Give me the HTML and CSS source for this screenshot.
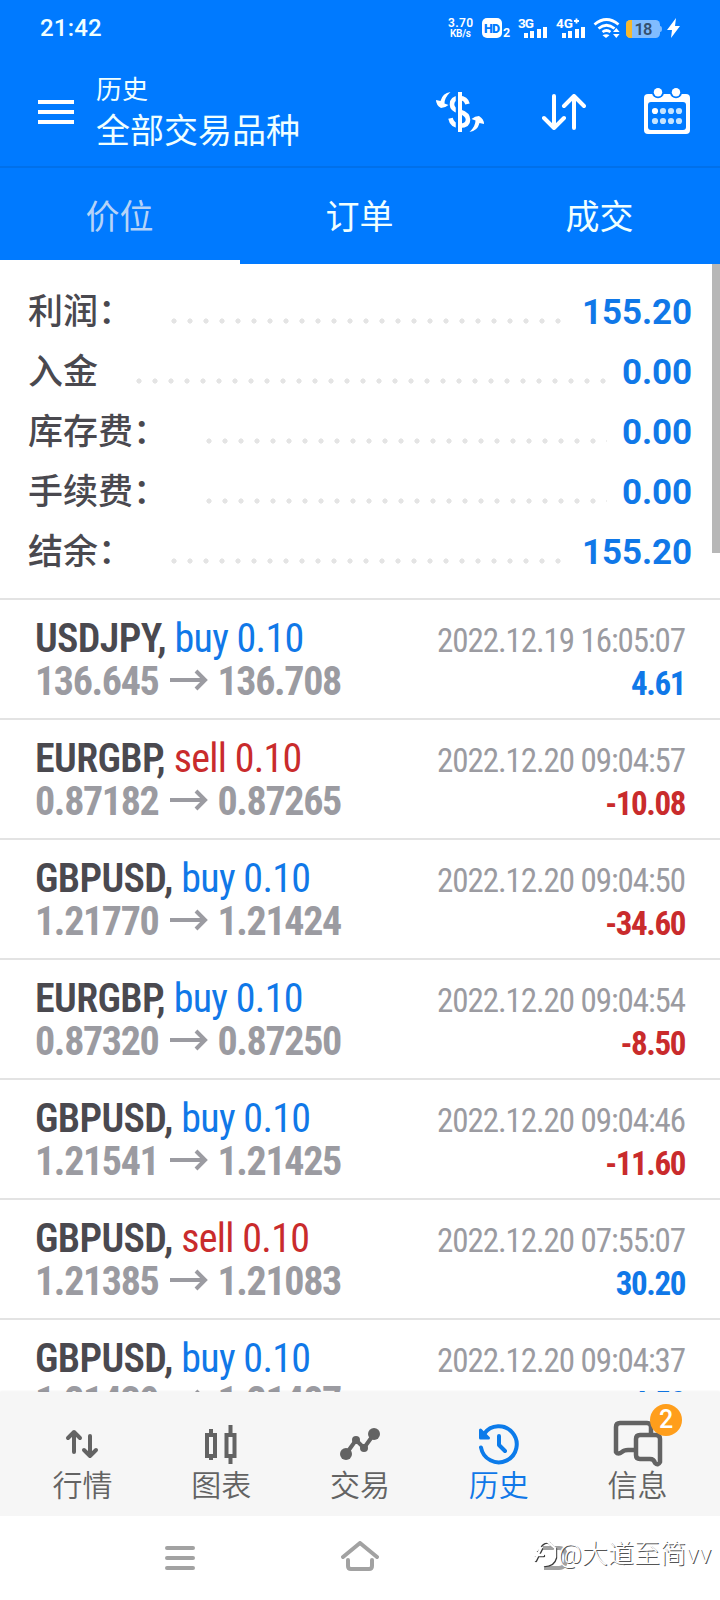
FILE: index.html
```html
<!DOCTYPE html>
<html lang="zh-CN">
<head>
<meta charset="utf-8">
<title>历史</title>
<link rel="stylesheet" href="styles.css">
</head>
<body>
<div class="phone">
  <header class="top">
    <div class="status">
      <span class="clock">21:42</span>
      <svg class="status-icons" width="250" height="40" viewBox="440 8 250 40">
        <g fill="#fff" font-family="Roboto, sans-serif" font-weight="700">
          <text x="448" y="27" font-size="12" font-weight="600" textLength="25">3.70</text>
          <text x="450" y="37" font-size="10" font-weight="600" textLength="21">KB/s</text>
          <rect x="482" y="18" width="20" height="20" rx="5"/>
          <text x="484" y="33" font-size="12.5" fill="#007aff" textLength="16" font-weight="900">HD</text>
          <text x="503" y="37" font-size="12.5">2</text>
          <text x="518" y="28" font-size="13.5" textLength="16">3G</text>
          <text x="556" y="28" font-size="13.5" textLength="17">4G</text>
          <path d="M574 21h5M576.500 18.500v5" stroke="#fff" stroke-width="1.800"/>
          <path d="M524 33h4v5h-4zM530 31h4v7h-4zM537 29h4v9h-4zM543 27h4v11h-4zM562 33h4v5h-4zM568 31h4v7h-4zM575 29h4v9h-4zM581 27h4v11h-4z"/>
          <rect x="626" y="20" width="34" height="18" rx="4.5" fill="#80bcff"/>
          <path d="M630.500 20h1.500v18h-1.500a4.500 4.500 0 0 1-4.500-4.500v-9a4.500 4.500 0 0 1 4.500-4.500z" fill="#f5b82e"/>
          <path d="M660 26q2 0 2 3t-2 3z" fill="#80bcff"/>
          <text x="634.500" y="35" font-size="16.5" font-weight="600" fill="#34506f" textLength="18">18</text>
          <path d="M676 18l-9 12h5l-1 8 9-12h-5z"/>
          <path d="M613 32l3.300-4 3.300 4zM613 34h6.600l-3.300 4z"/>
        </g>
        <g fill="none" stroke="#fff" stroke-width="2.800">
          <path d="M594.500 24.500q12-10 24 0M598.500 28.500q8-6.500 16 0M602.500 32q4-3 8 0"/>
        </g>
        <path d="M602.500 35.300q4-2 7 0l-3.500 2.700z" fill="#fff"/>
      </svg>
    </div>
    <div class="appbar">
      <svg class="menu" width="36" height="24" viewBox="0 0 36 24"><path d="M0 0h36v4H0zM0 10h36v4H0zM0 20h36v4H0z" fill="#fff"/></svg>
      <div class="titles"><span class="title-small">历史</span><span class="title-big">全部交易品种</span></div>
      <div class="actions">
        <svg width="48" height="48" viewBox="436 88 48 48">
          <path d="M467.500 104q-1.500-6-8-6q-7.500 0-7.500 6.500q0 5 8 7.300 8 2.500 8 8q0 6-8 6-8 0-9.500-7.500" fill="none" stroke="#fff" stroke-width="4.600"/>
          <path d="M457 94v37" stroke="#007aff" stroke-width="2.500"/>
          <path d="M460 92v40" stroke="#fff" stroke-width="4"/>
          <g fill="#fff"><path id="swap" d="M450.500 92q-8 1-10 9l-4.500-1q0 5 5 8 4 0 7.500-3l-4-1.500q0-6 6-11.500z"/><use href="#swap" transform="rotate(180 460 112)"/></g>
        </svg>
        <svg width="44" height="36" viewBox="0 0 44 36" fill="none" stroke="#fff" stroke-width="4" stroke-linecap="round" stroke-linejoin="round"><path d="M12 2v32M2 24l10 10 10-10M32 34V2M22 12 32 2l10 10"/></svg>
        <svg width="46" height="46" viewBox="0 0 46 46">
          <rect y="6" width="46" height="40" rx="4" fill="#fff"/><rect x="4" y="14" width="38" height="28" rx="3" fill="#007aff"/>
          <g fill="#007aff"><circle cx="14" cy="4.300" r="6"/><circle cx="32" cy="4.300" r="6"/></g>
          <g fill="#fff"><circle cx="14" cy="4.300" r="4.200"/><circle cx="32" cy="4.300" r="4.200"/></g>
          <g fill="#c4e4ff"><circle cx="11" cy="23" r="3.100" fill="#fff"/><circle cx="19" cy="23" r="3.100"/><circle cx="27" cy="23" r="3.100"/><circle cx="35" cy="23" r="3.100"/><circle cx="11" cy="33" r="3.100"/><circle cx="19" cy="33" r="3.100"/><circle cx="27" cy="33" r="3.100"/><circle cx="35" cy="33" r="3.100"/></g>
        </svg>
      </div>
    </div>
    <nav class="tabs"><span class="tab selected">价位</span><span class="tab">订单</span><span class="tab">成交</span></nav>
  </header>
  <main class="content">
    <section class="summary">
      <div class="sum"><span class="label">利润：</span><i class="dots"></i><b>155.20</b></div>
      <div class="sum"><span class="label">入金</span><i class="dots"></i><b>0.00</b></div>
      <div class="sum"><span class="label">库存费：</span><i class="dots"></i><b>0.00</b></div>
      <div class="sum"><span class="label">手续费：</span><i class="dots"></i><b>0.00</b></div>
      <div class="sum"><span class="label">结余：</span><i class="dots"></i><b>155.20</b></div>
      <div class="scrollbar"></div>
    </section>
    <section class="deals" id="deals"></section>
  </main>
  <nav class="bottom">
    <div class="item"><svg width="60" height="52" viewBox="52 1416 60 52" fill="none" stroke="#636363" stroke-width="4" stroke-linecap="round" stroke-linejoin="round"><path d="M74 1452v-20M68 1438l6-6 6 6M90 1436v20M84 1450l6 6 6-6"/></svg><span>行情</span></div>
    <div class="item"><svg width="60" height="52" viewBox="191 1416 60 52" fill="none" stroke="#636363" stroke-width="4"><path d="M211 1429v5M211 1456v4M230.500 1425v8M230.500 1457v7"/><path d="M207 1435h8v21h-8zM226.500 1435h8v21h-8z"/></svg><span>图表</span></div>
    <div class="item"><svg width="60" height="52" viewBox="330 1416 60 52" fill="#636363"><path d="M346 1454l10-14 8 8 10-14" fill="none" stroke="#636363" stroke-width="4"/><circle cx="346" cy="1454" r="6"/><circle cx="356" cy="1440" r="4"/><circle cx="364" cy="1448" r="4"/><circle cx="374" cy="1434" r="6"/></svg><span>交易</span></div>
    <div class="item active"><svg width="60" height="52" viewBox="469 1416 60 52" fill="none" stroke="#0c7bea" stroke-width="4" stroke-linecap="round" stroke-linejoin="round"><path d="M484 1434a18 18 0 1 1-3 13.500M499 1436v9l6 6"/><path d="M480.500 1430v8h8z" fill="#0c7bea" stroke-width="3"/></svg><span>历史</span></div>
    <div class="item"><svg width="60" height="52" viewBox="608 1416 60 52" fill="none" stroke="#636363" stroke-width="4.500" stroke-linejoin="round"><path d="M634 1450h-6q-4 0-6 2-4 3-6 0v-25q0-4 4-4h27q4 0 4 4v8"/><path d="M640 1435h16q4 0 4 4v23q-2 4-5 1-1-4-5-4h-10q-4 0-4-4v-16q0-4 4-4z"/></svg><em class="badge">2</em><span>信息</span></div>
  </nav>
  <footer class="system">
    <svg width="30" height="24" viewBox="0 0 30 24" stroke="#a2a2a2" stroke-width="4" stroke-linecap="round"><path d="M2 2h26M2 12h26M2 22h26"/></svg>
    <svg class="home" width="38" height="30" viewBox="0 0 38 30" fill="none" stroke="#a2a2a2" stroke-width="4" stroke-linecap="round" stroke-linejoin="round"><path d="M2 16 19 2l17 14M7 19v6q0 3 3 3h18q3 0 3-3v-6"/></svg>
    <svg class="back" width="30" height="24" viewBox="0 0 30 24" fill="none" stroke="#a2a2a2" stroke-width="4"><path d="M4 2h16q7 0 7 10t-7 10H5"/></svg>
    <div class="watermark"><svg width="24" height="32" viewBox="0 0 24 32" fill="none" stroke-linecap="round"><path d="M4 13l4-6q6-5 9 0l5 4v9q-2 8-11 8M2 23l6-12M2 18h8" stroke="#3a3a3a" stroke-width="2.400"/><path d="M3 12l4-6q6-5 9 0l5 4v9q-2 8-11 8M1 22l6-12M1 17h8" stroke="#fff" stroke-width="2.400"/></svg><span>@大道至简vv</span></div>
  </footer>
</div>
<script src="app.js"></script>
</body>
</html>
```

FILE: styles.css
```css
* { box-sizing: border-box; }
body { margin: 0; background: #fff; font-family: Roboto, "Noto Sans CJK SC", sans-serif; color: #4a494f; }
svg { display: block; flex: none; }
.phone { width: 720px; height: 1600px; display: flex; flex-direction: column; overflow: hidden; }
.top { background: #007aff; height: 264px; color: #f0ffff; flex: none; }
.status { height: 56px; padding: 8px 30px 0 40px; display: flex; justify-content: space-between; }
.clock { font-size: 24px; font-weight: 500; line-height: 40px; letter-spacing: .2px; }
.appbar { height: 112px; border-bottom: 2px solid #0070ea; display: flex; padding: 0 30px 0 38px; }
.menu { margin: 44px 22px 0 0; }
.titles { display: flex; flex-direction: column; padding-top: 16px; }
.title-small { font-size: 26px; line-height: 36px; }
.title-big { font-size: 34px; line-height: 46px; }
.actions { margin-left: auto; display: flex; align-items: flex-start; gap: 58px; padding-top: 32px; }
.actions svg:nth-child(2) { margin-top: 6px; }
.tabs { display: grid; grid-template-columns: repeat(3, 1fr); height: 96px; font-size: 34px; line-height: 90px; text-align: center; }
.tab { height: 96px; padding: 4px 1px 0 0; }
.selected { color: #b5d3f8; border-bottom: 4px solid #fff; }
.content { height: 1128px; overflow: hidden; flex: none; }
.summary { position: relative; height: 336px; padding: 19px 28px 0; border-bottom: 2px solid #e3e3e3; }
.sum { height: 60px; display: flex; font-size: 35px; line-height: 60px; }
.label { font-weight: 500; }
.dots { flex: 1; height: 6px; margin: 35px 15px 0 38px; background: radial-gradient(circle at 3px 3px, #e4e4e4 2.300px, transparent 2.900px) 0 0 / 16px 6px repeat-x; }
.sum b { color: #1078e8; font-size: 35px; letter-spacing: -.1px; }
.scrollbar { position: absolute; right: 0; top: 0; width: 8px; height: 289px; background: #b7b7b7; }
.deal { height: 120px; padding: 16px 35px 0; border-bottom: 2px solid #e3e3e3; display: flex; justify-content: space-between; font-stretch: 75%; }
.left, .right { display: flex; flex-direction: column; white-space: nowrap; }
.left { padding-top: 1px; }
.right { align-items: flex-end; padding-top: 3px; }
.symbol { font-size: 40px; line-height: 44px; font-weight: 600; letter-spacing: -.650px; }
.symbol span { font-weight: 400; letter-spacing: -.7px; }
.prices { font-size: 40px; line-height: 42px; font-weight: 700; letter-spacing: -1.350px; color: #9b9ba1; display: flex; align-items: center; }
.prices svg { margin: -4px 8px 0 12px; }
.time { font-size: 33px; line-height: 44px; letter-spacing: -1.080px; color: #9b9ba1; }
.profit { font-size: 33px; line-height: 42px; font-weight: 700; letter-spacing: -1.400px; }
.blue { color: #1078e8; }
.red { color: #c92b2c; }
.bottom { position: relative; height: 124px; flex: none; background: #f6f6f6; box-shadow: 0 -1px 2px rgba(0, 0, 0, .05); padding: 0 13px; display: grid; grid-template-columns: repeat(5, 1fr); color: #636363; }
.item { position: relative; display: flex; flex-direction: column; align-items: center; padding-top: 24px; font-size: 30px; line-height: 34px; font-weight: 350; }
.item svg { margin-bottom: 1px; }
.active { color: #1078e8; }
.badge { position: absolute; left: 82px; top: 12px; width: 32px; height: 32px; border-radius: 50%; background: #ff9e1b; color: #fff; font: 500 25px/32px Roboto, sans-serif; text-align: center; }
.system { position: relative; height: 84px; flex: none; display: flex; padding: 30px 0 0 165px; }
.home { margin: -5px 0 0 146px; }
.back { margin-left: 160px; }
.watermark { position: absolute; left: 534px; top: 22px; display: flex; font-size: 26px; line-height: 32px; letter-spacing: .1px; font-weight: 300; color: #fff; text-shadow: 1px 1px 0 #555; white-space: nowrap; }
```

FILE: app.js
```javascript
const deals = [
  ['USDJPY', 'buy', '136.645', '136.708', '2022.12.19 16:05:07', '4.61'],
  ['EURGBP', 'sell', '0.87182', '0.87265', '2022.12.20 09:04:57', '-10.08'],
  ['GBPUSD', 'buy', '1.21770', '1.21424', '2022.12.20 09:04:50', '-34.60'],
  ['EURGBP', 'buy', '0.87320', '0.87250', '2022.12.20 09:04:54', '-8.50'],
  ['GBPUSD', 'buy', '1.21541', '1.21425', '2022.12.20 09:04:46', '-11.60'],
  ['GBPUSD', 'sell', '1.21385', '1.21083', '2022.12.20 07:55:07', '30.20'],
  ['GBPUSD', 'buy', '1.21439', '1.21487', '2022.12.20 09:04:37', '4.50']
];
const arrow = '<svg width="39" height="22" viewBox="0 0 39 22" fill="none" stroke="#9b9ba1" stroke-width="4"><path d="M0 11h36M26 2l9 9-9 9"/></svg>';
document.getElementById('deals').innerHTML = deals.map(([s, side, a, b, t, p]) =>
  `<article class="deal"><div class="left"><div class="symbol">${s}, <span class="${side === 'buy' ? 'blue' : 'red'}">${side} 0.10</span></div><div class="prices">${a}${arrow}${b}</div></div><div class="right"><div class="time">${t}</div><div class="profit ${p[0] === '-' ? 'red' : 'blue'}">${p}</div></div></article>`).join('');
```
